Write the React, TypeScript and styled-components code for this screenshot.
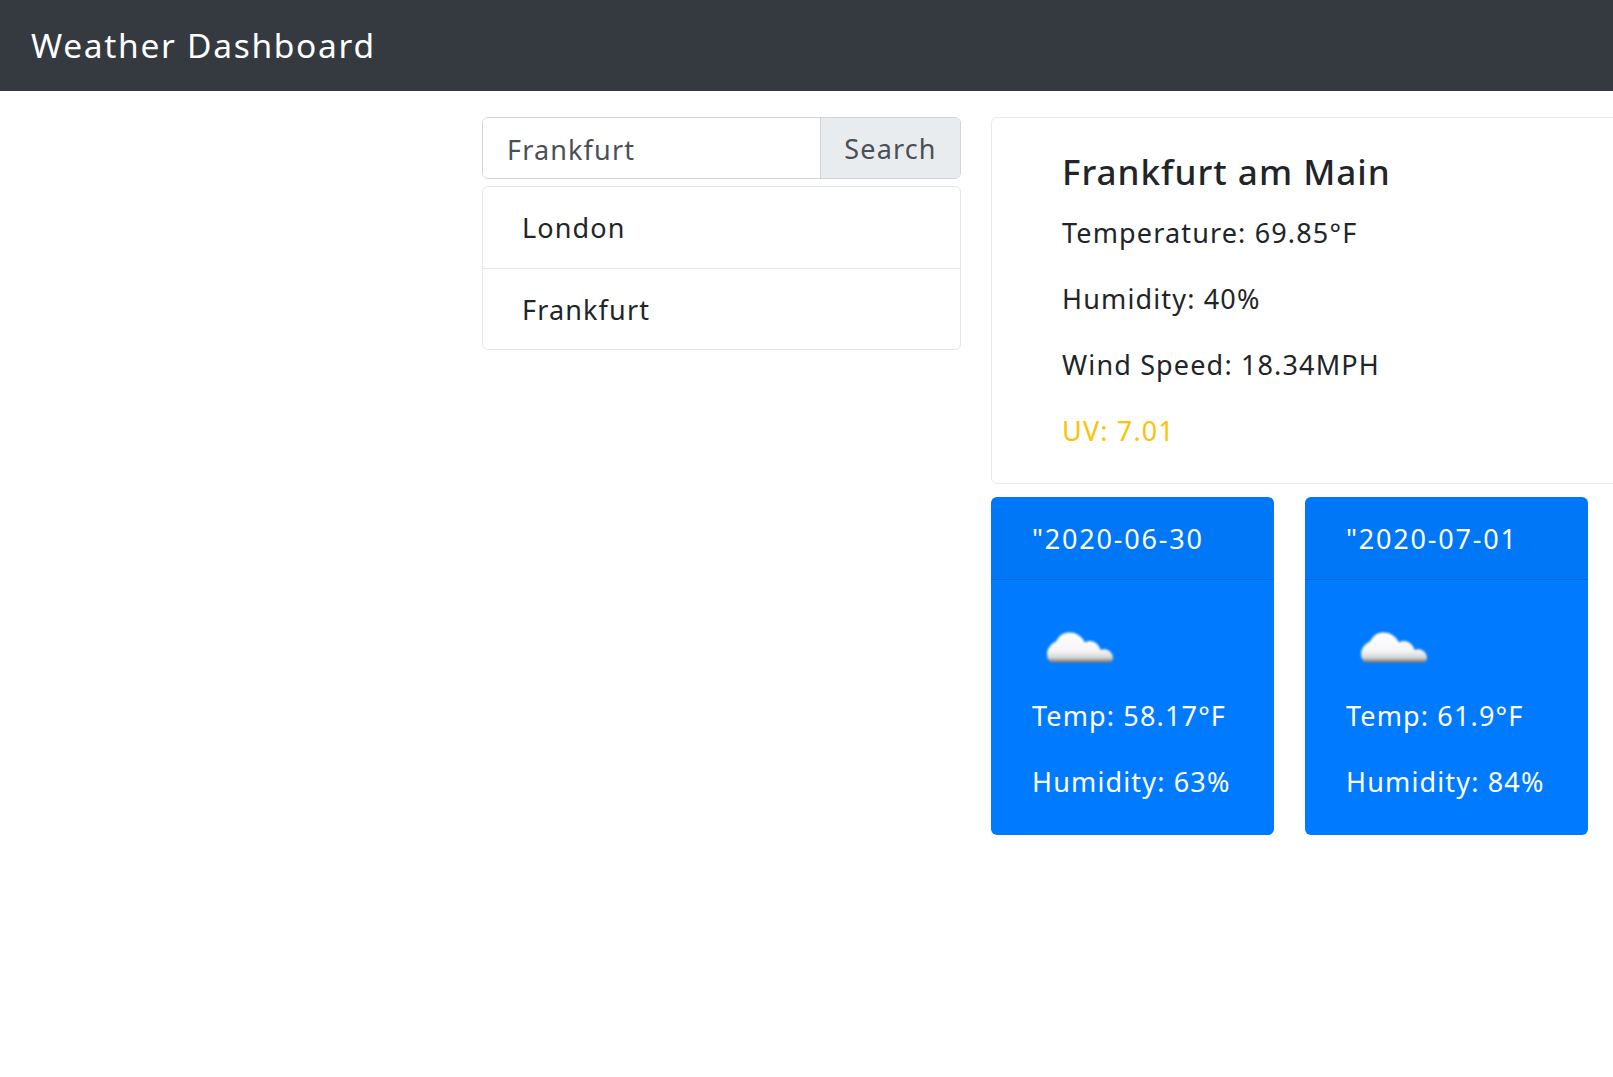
import styled, { createGlobalStyle } from "styled-components";

const GlobalStyle = createGlobalStyle`
  html, body {
    margin: 0;
    padding: 0;
    background: #fff;
    overflow: hidden;
  }
  body {
    width: 1613px;
    height: 1077px;
    font-family: "Noto Sans", "Open Sans", sans-serif;
    font-size: 27px;
    letter-spacing: 1.15px;
    color: #212529;
  }
  * {
    box-sizing: border-box;
  }
`;

const Navbar = styled.nav`
  height: 91px;
  padding: 0 0 2px 31px;
  display: flex;
  align-items: center;
  background: #343a40;
  color: #fff;
  font-size: 33.5px;
  letter-spacing: 1.7px;
`;

const Main = styled.main`
  display: grid;
  grid-template-columns: 479px 720px;
  column-gap: 30px;
  padding: 26px 0 0 482px;
`;

const SearchColumn = styled.section`
  display: flex;
  flex-direction: column;
  gap: 7px;
  align-self: start;
`;

const InputGroup = styled.div`
  display: flex;
  height: 62px;
  border: 1.5px solid #ced4da;
  border-radius: 6px;
  overflow: hidden;
`;

const SearchInput = styled.input`
  flex: 1;
  min-width: 0;
  padding: 2px 0 0 24px;
  border: 0;
  outline: 0;
  font: inherit;
  letter-spacing: inherit;
  color: #495057;
`;

const SearchButton = styled.button`
  width: 140px;
  padding: 0;
  border: 0;
  border-left: 1.5px solid #ced4da;
  background: #e9ecef;
  font: inherit;
  letter-spacing: inherit;
  color: #495057;
`;

const CityList = styled.ul`
  margin: 0;
  padding: 0;
  list-style: none;
  border: 1.5px solid #e3e5e8;
  border-radius: 6px;
`;

const CityItem = styled.li`
  height: 81px;
  padding-left: 39px;
  display: flex;
  align-items: center;

  & + & {
    border-top: 1.5px solid #e3e5e8;
  }
`;

const ResultColumn = styled.section`
  display: flex;
  flex-direction: column;
  gap: 13px;
`;

const CurrentCard = styled.article`
  height: 367px;
  padding: 34px 0 0 70px;
  border: 1.5px solid #e8e9eb;
  border-radius: 6px;
`;

const CityTitle = styled.h2`
  margin: 0 0 21px;
  font-size: 35px;
  font-weight: 500;
  letter-spacing: 1px;
  line-height: 40px;
`;

const Stat = styled.p<{ $tone?: string }>`
  margin: 0 0 26px;
  line-height: 40px;
  color: ${(props) => props.$tone || "inherit"};

  &:last-child {
    margin-bottom: 0;
  }
`;

const Forecast = styled.div`
  display: flex;
  gap: 31px;
`;

const ForecastCard = styled.article`
  width: 283px;
  height: 338px;
  border-radius: 6px;
  overflow: hidden;
  background: #007bff;
  color: #fff;
`;

const ForecastHeader = styled.header`
  height: 83px;
  padding-left: 41px;
  display: flex;
  align-items: center;
  background: rgba(0, 0, 0, 0.03);
  border-bottom: 1px solid rgba(0, 0, 0, 0.125);
  letter-spacing: 1.8px;
`;

const ForecastBody = styled.div`
  padding: 33px 41px 0;
`;

const CloudIcon = styled.svg`
  display: block;
  width: 84px;
  height: 83px;
`;

const Cloud = () => (
  <CloudIcon viewBox="0 0 84 83">
    <defs>
      <linearGradient id="cloud-fill" x1="0" y1="0" x2="0" y2="1">
        <stop offset="0" stopColor="#ffffff" />
        <stop offset="0.6" stopColor="#f6f6f6" />
        <stop offset="0.82" stopColor="#d6d6d6" />
        <stop offset="1" stopColor="#63666a" />
      </linearGradient>
      <filter id="cloud-soft" x="-10%" y="-10%" width="120%" height="120%">
        <feGaussianBlur stdDeviation="0.9" />
      </filter>
    </defs>
    <path
      d="M22 50C17 50 15 45 15 41C15 35 20 30 24.5 28C27 22 32 19.5 38 19.5C45 19.5 50 24 53 29.5C56 27 62 27.5 65 31C67 33 68 35 68.5 37C72 35 78 36.5 80 41C82 45 81 50 76 50Z"
      fill="url(#cloud-fill)"
      filter="url(#cloud-soft)"
    />
  </CloudIcon>
);

const forecasts = [
  { date: '"2020-06-30', temp: "58.17", humidity: 63 },
  { date: '"2020-07-01', temp: "61.9", humidity: 84 },
];

const App = () => {
  return (
    <>
      <GlobalStyle />
      <Navbar>Weather Dashboard</Navbar>
      <Main>
        <SearchColumn>
          <InputGroup>
            <SearchInput defaultValue="Frankfurt" />
            <SearchButton>Search</SearchButton>
          </InputGroup>
          <CityList>
            <CityItem>London</CityItem>
            <CityItem>Frankfurt</CityItem>
          </CityList>
        </SearchColumn>
        <ResultColumn>
          <CurrentCard>
            <CityTitle>Frankfurt am Main</CityTitle>
            <Stat>Temperature: 69.85°F</Stat>
            <Stat>Humidity: 40%</Stat>
            <Stat>Wind Speed: 18.34MPH</Stat>
            <Stat $tone="#ffc107">UV: 7.01</Stat>
          </CurrentCard>
          <Forecast>
            {forecasts.map((day) => (
              <ForecastCard key={day.date}>
                <ForecastHeader>{day.date}</ForecastHeader>
                <ForecastBody>
                  <Cloud />
                  <Stat>Temp: {day.temp}°F</Stat>
                  <Stat>Humidity: {day.humidity}%</Stat>
                </ForecastBody>
              </ForecastCard>
            ))}
          </Forecast>
        </ResultColumn>
      </Main>
    </>
  );
};

export default App;
